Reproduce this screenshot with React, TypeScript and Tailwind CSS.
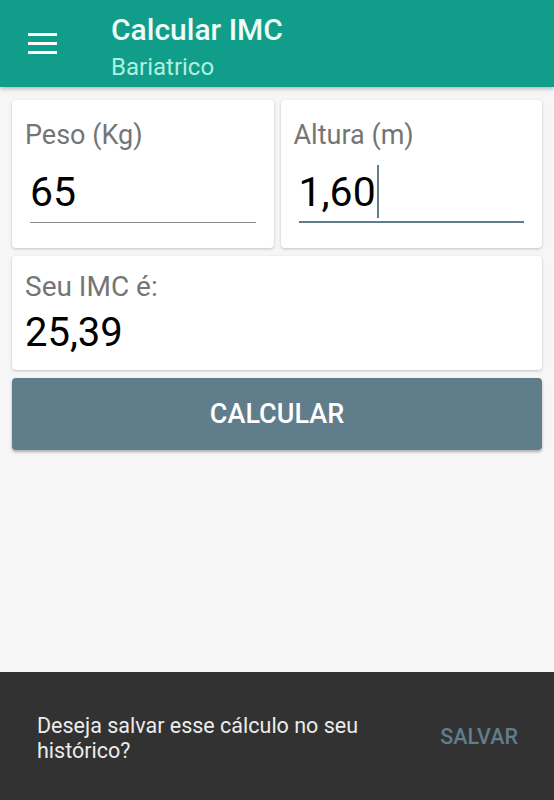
import { useState } from "react";

function Field({ label, value, focused }: { label: string; value: string; focused?: boolean }) {
  return (
    <div className="h-[148px] flex-1 rounded-[4px] bg-white pl-[13px] pr-[18px] pt-[19px] shadow-[0_1px_3px_rgba(0,0,0,0.22)]">
      <div className="text-[27px] leading-[32px] text-[#757575]">{label}</div>
      <div
        className={`mt-[21px] ml-[5px] flex h-[51px] items-start ${
          focused ? "border-b-[2px] border-[#607d8b]" : "border-b-[1.5px] border-[#8a8a8a]"
        }`}
      >
        <span className="text-[41px] leading-none text-black">{value}</span>
        {focused && <span className="-mt-[7px] ml-[1px] h-[53px] w-[2px] bg-[#607d8b]" />}
      </div>
    </div>
  );
}

export default function App() {
  const [peso] = useState("65");
  const [altura] = useState("1,60");

  return (
    <div className="relative h-[800px] w-[554px] overflow-hidden bg-[#f6f6f6] font-['Roboto',sans-serif]">
      <header className="flex h-[87px] items-start bg-[#109e8a] shadow-[0_2px_4px_rgba(0,0,0,0.25)]">
        <button className="ml-[28px] mt-[33px] flex w-[29px] flex-col gap-[6px]">
          <span className="h-[3px] w-full bg-white" />
          <span className="h-[3px] w-full bg-white" />
          <span className="h-[3px] w-full bg-white" />
        </button>
        <div className="ml-[54px] mt-[13px]">
          <div className="text-[30px] font-medium leading-[34px] text-[#eefcf8]">Calcular IMC</div>
          <div className="mt-[6px] text-[24px] leading-[28px] text-[#b2efdf]">Bariatrico</div>
        </div>
      </header>

      <main className="flex flex-col gap-[8px] px-[12px] pt-[13px]">
        <div className="flex gap-[7px]">
          <Field label="Peso (Kg)" value={peso} />
          <Field label="Altura (m)" value={altura} focused />
        </div>

        <div className="h-[114px] rounded-[4px] bg-white pl-[13px] pt-[15px] shadow-[0_1px_3px_rgba(0,0,0,0.22)]">
          <div className="text-[28px] leading-[32px] text-[#757575]">Seu IMC é:</div>
          <div className="mt-[8px] text-[40px] leading-[44px] text-black">25,39</div>
        </div>

        <button className="h-[72px] rounded-[4px] bg-[#607d8b] text-[27px] font-medium text-white shadow-[0_2px_3px_rgba(0,0,0,0.3)]">
          CALCULAR
        </button>
      </main>

      <div className="absolute bottom-0 left-0 right-0 flex h-[128px] items-center justify-between bg-[#323232] pl-[37px] pr-[36px] pt-[3px]">
        <p className="w-[345px] text-[21.5px] leading-[25px] text-[#ececec]">
          Deseja salvar esse cálculo no seu histórico?
        </p>
        <button className="text-[21.5px] font-medium text-[#607d8b]">SALVAR</button>
      </div>
    </div>
  );
}
